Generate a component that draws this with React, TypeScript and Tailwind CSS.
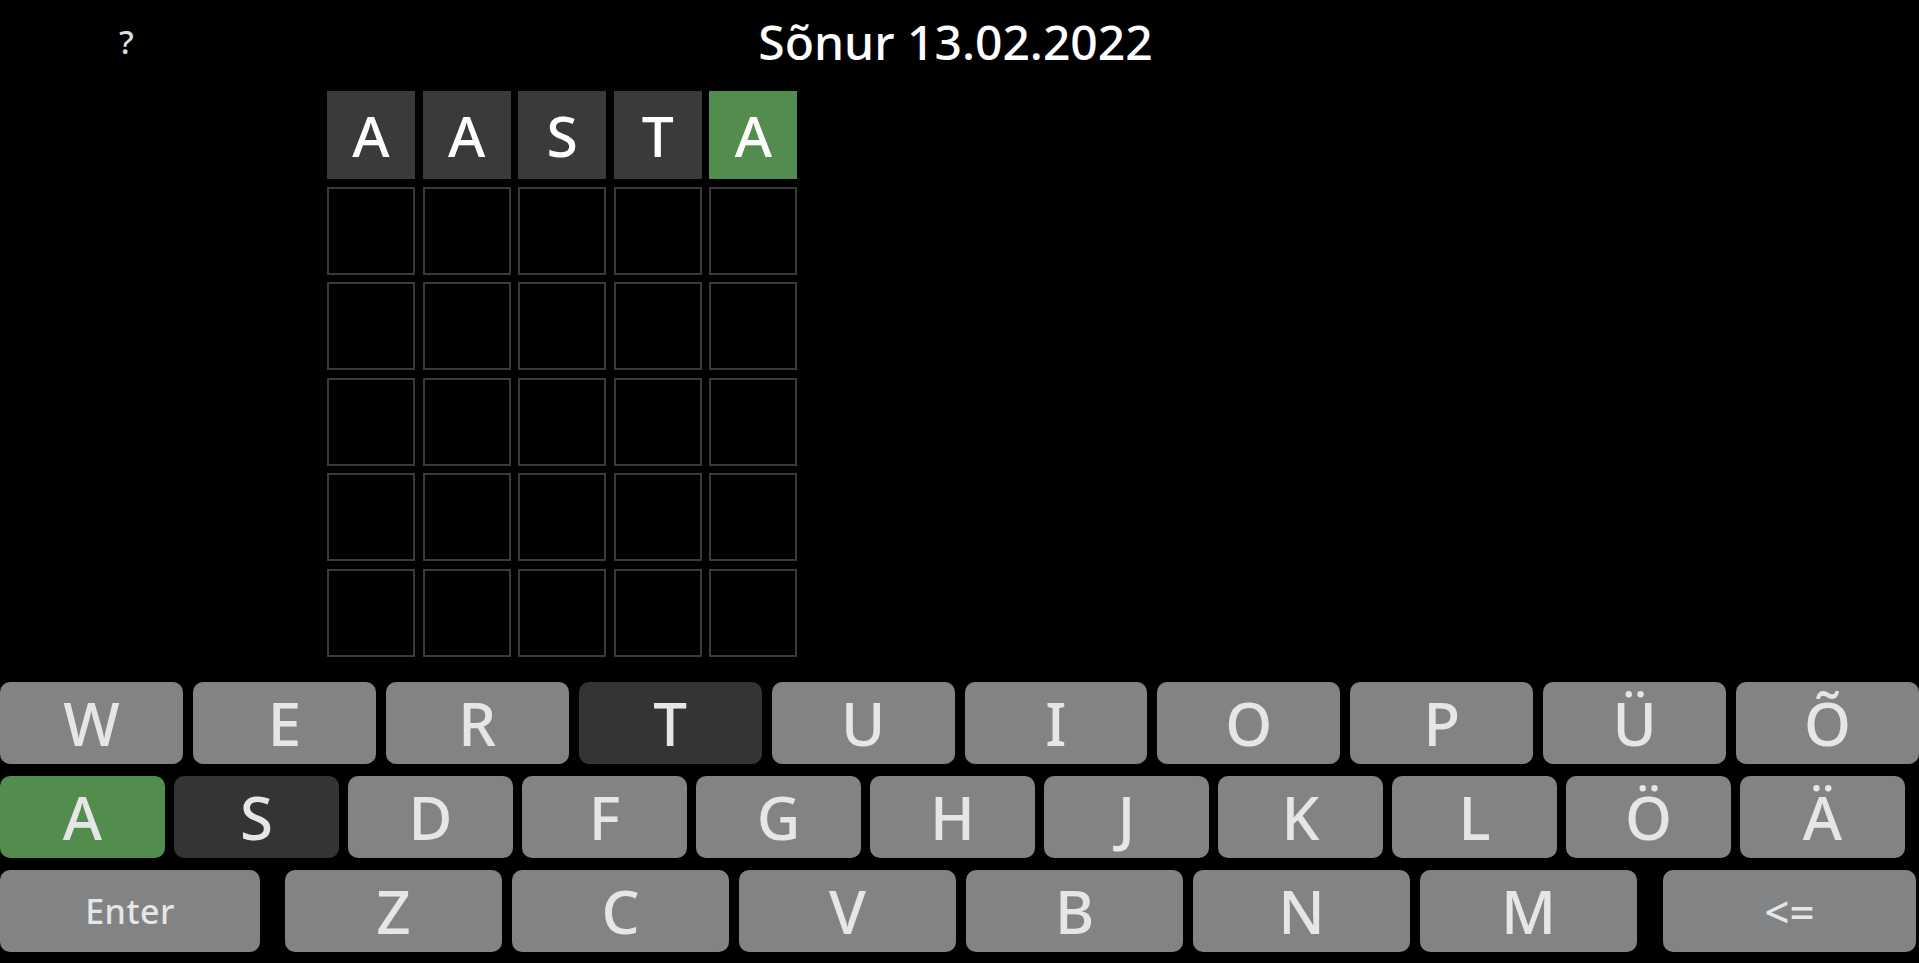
import React from 'react';

type State = 'absent' | 'correct' | 'empty' | 'idle';

const font = { fontFamily: '"Noto Sans", "Open Sans", sans-serif' };

const guesses: { ch: string; st: State }[][] = [
    [
        { ch: 'A', st: 'absent' },
        { ch: 'A', st: 'absent' },
        { ch: 'S', st: 'absent' },
        { ch: 'T', st: 'absent' },
        { ch: 'A', st: 'correct' },
    ],
];

const rows = Array.from({ length: 6 }, (_, r) =>
    Array.from({ length: 5 }, (_, c) => guesses[r]?.[c] ?? { ch: '', st: 'empty' as State })
);

const keyState: Record<string, State> = { A: 'correct', S: 'absent', T: 'absent' };

const tileClass = (st: State) => {
    if (st === 'absent') return 'bg-[#3a3a3c]';
    if (st === 'correct') return 'bg-[#538d4e]';
    return 'border-2 border-[#3a3a3c]';
};

const keyClass = (st: State) => {
    if (st === 'absent') return 'bg-[#333436]';
    if (st === 'correct') return 'bg-[#538d4e]';
    return 'bg-[#818384]';
};

const Key = ({ label, className = '' }: { label: string; className?: string }) => (
    <button
        className={`h-[82px] rounded-[10px] flex items-center justify-center text-[#e6e6e6] text-[60px] font-medium leading-none ${keyClass(
            keyState[label] ?? 'idle'
        )} ${className}`}
        style={font}
    >
        {label}
    </button>
);

const App = () => {
    const row1 = ['W', 'E', 'R', 'T', 'U', 'I', 'O', 'P', 'Ü', 'Õ'];
    const row2 = ['A', 'S', 'D', 'F', 'G', 'H', 'J', 'K', 'L', 'Ö', 'Ä'];
    const row3 = ['Z', 'C', 'V', 'B', 'N', 'M'];

    return (
        <div className="w-full h-screen bg-black flex flex-col overflow-hidden" style={font}>
            {/* Header */}
            <header className="h-[88px] grid grid-cols-[1fr_auto_1fr] items-center">
                <div className="pl-[119px] pb-[3px]">
                    <button className="text-[#dddddd] text-[33px] font-medium leading-none" style={font}>
                        ?
                    </button>
                </div>
                <h1 className="text-white text-[48px] font-medium leading-none pb-[4px] pr-[8px]">
                    Sõnur 13.02.2022
                </h1>
                <div />
            </header>

            {/* Board */}
            <div className="ml-[327px] mt-[3px] flex flex-col gap-[7.6px] w-fit">
                {rows.map((row, r) => (
                    <div key={r} className="flex gap-[7.6px]">
                        {row.map((t, c) => (
                            <div
                                key={c}
                                className={`w-[88px] h-[88px] flex items-center justify-center text-white text-[57px] font-medium leading-none ${tileClass(
                                    t.st
                                )}`}
                            >
                                {t.ch}
                            </div>
                        ))}
                    </div>
                ))}
            </div>

            {/* Keyboard */}
            <div className="mt-auto pb-[11px] flex flex-col gap-[12px]">
                <div className="flex gap-[10px]">
                    {row1.map((k) => (
                        <Key key={k} label={k} className="flex-1" />
                    ))}
                </div>
                <div className="flex gap-[9px]">
                    {row2.map((k) => (
                        <Key key={k} label={k} className="w-[165px]" />
                    ))}
                </div>
                <div className="flex">
                    <button
                        className="w-[260px] h-[82px] rounded-[10px] bg-[#818384] text-[#e6e6e6] text-[34px] font-medium leading-none tracking-[0.5px]"
                        style={font}
                    >
                        Enter
                    </button>
                    <div className="ml-[25px] flex gap-[10px]">
                        {row3.map((k) => (
                            <Key key={k} label={k} className="w-[217px]" />
                        ))}
                    </div>
                    <button
                        className="ml-[26px] w-[253px] h-[82px] rounded-[10px] bg-[#818384] text-[#e6e6e6] text-[44px] font-medium leading-none"
                        style={font}
                    >
                        {'<='}
                    </button>
                </div>
            </div>
        </div>
    );
};

export default App;
